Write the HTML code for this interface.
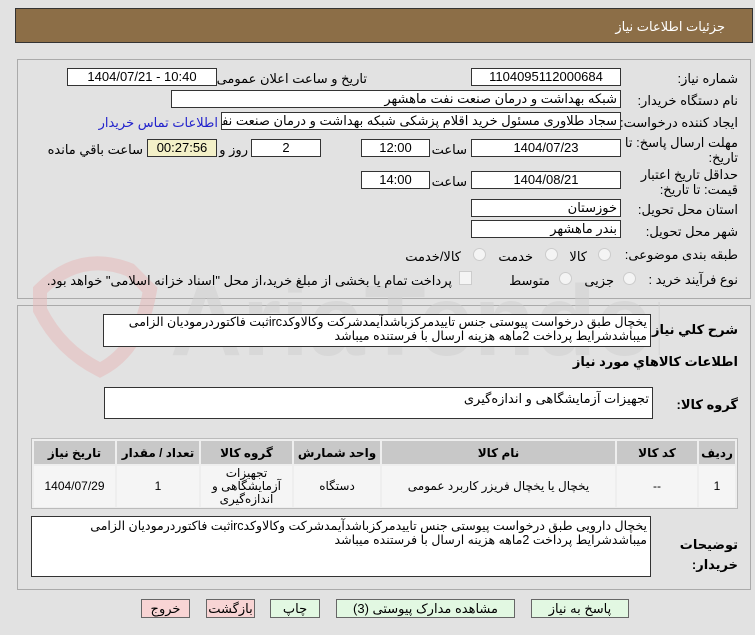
<!DOCTYPE html>
<html><head><meta charset="utf-8"><style>
body{margin:0;width:755px;height:635px;background:#e2e2e2;font-family:"Liberation Sans","DejaVu Sans",sans-serif;font-size:12px;color:#000;position:relative;overflow:hidden}
.a{position:absolute}
.box{position:absolute;background:#fff;border:1px solid #333;box-sizing:border-box;font-size:13px;line-height:16px;text-align:center;white-space:nowrap;overflow:hidden}
.r{text-align:right;padding-right:3px;direction:rtl}
.l{position:absolute;direction:rtl;text-align:right;white-space:nowrap;font-size:13px}
.panel{position:absolute;border:1px solid #aaa;box-sizing:border-box}
.rad{position:absolute;width:11px;height:11px;border:1px solid #ccc;border-radius:50%;background:#f4f4f4}
.btn{position:absolute;top:599px;height:19px;border:1px solid #666;box-sizing:border-box;font-size:13px;text-align:center;line-height:17px}
table{border-collapse:separate;border-spacing:2px;direction:rtl}
td,th{font-size:12px;text-align:center;padding:0}
th{background:#c8c8c8;height:23px}
td{background:#f5f5f5;height:41px;line-height:13px}
</style></head><body>
<div class="a" style="left:15px;top:8px;width:738px;height:35px;background:#8c6e47;border:1px solid #333;box-sizing:border-box"></div>
<div class="l" style="right:30px;top:19px;color:#fff;font-size:13px">جزئیات اطلاعات نیاز</div>

<div class="panel" style="left:17px;top:59px;width:734px;height:240px"></div>
<div class="panel" style="left:17px;top:305px;width:734px;height:285px"></div>

<!-- watermark -->
<svg class="a" style="left:20px;top:250px" width="640" height="130" opacity="0.5">
<path d="M20 40 Q60 0 110 20 L130 40 Q120 100 80 120 Q40 100 20 60 Z" fill="none" stroke="#e6b8b8" stroke-width="14"/>
<text x="150" y="105" font-family="Liberation Sans" font-size="100" font-weight="bold" fill="#cfcfcf">AriaTender.net</text>
</svg>

<div class="l" style="right:17px;top:71px">شماره نیاز:</div>
<div class="box" style="left:471px;top:68px;width:150px;height:18px">1104095112000684</div>
<div class="l" style="right:388px;top:71px">تاریخ و ساعت اعلان عمومی:</div>
<div class="box" style="left:67px;top:68px;width:150px;height:18px">1404/07/21 - 10:40</div>

<div class="l" style="right:17px;top:93px">نام دستگاه خریدار:</div>
<div class="box r" style="left:171px;top:90px;width:450px;height:18px">شبکه بهداشت و درمان صنعت نفت ماهشهر</div>

<div class="l" style="right:17px;top:115px">ایجاد کننده درخواست:</div>
<div class="box r" style="left:221px;top:112px;width:400px;height:18px">سجاد طلاوری مسئول خرید اقلام پزشکی شبکه بهداشت و درمان صنعت نفت ماهشهر</div>
<div class="l" style="right:537px;top:115px;color:#2222cc">اطلاعات تماس خریدار</div>

<div class="l" style="right:17px;top:135px;line-height:15px">مهلت ارسال پاسخ: تا<br>تاریخ:</div>
<div class="box" style="left:471px;top:139px;width:150px;height:18px">1404/07/23</div>
<div class="l" style="right:288px;top:142px">ساعت</div>
<div class="box" style="left:361px;top:139px;width:69px;height:18px">12:00</div>
<div class="box" style="left:251px;top:139px;width:70px;height:18px">2</div>
<div class="l" style="right:507px;top:142px">روز و</div>
<div class="box" style="left:147px;top:139px;width:70px;height:18px;background:#f3f0c8">00:27:56</div>
<div class="l" style="right:612px;top:142px">ساعت باقي مانده</div>

<div class="l" style="right:17px;top:167px;line-height:15px">حداقل تاریخ اعتبار<br>قیمت: تا تاریخ:</div>
<div class="box" style="left:471px;top:171px;width:150px;height:18px">1404/08/21</div>
<div class="l" style="right:288px;top:174px">ساعت</div>
<div class="box" style="left:361px;top:171px;width:69px;height:18px">14:00</div>

<div class="l" style="right:17px;top:202px">استان محل تحویل:</div>
<div class="box r" style="left:471px;top:199px;width:150px;height:18px">خوزستان</div>
<div class="l" style="right:17px;top:224px">شهر محل تحویل:</div>
<div class="box r" style="left:471px;top:220px;width:150px;height:18px">بندر ماهشهر</div>

<div class="l" style="right:17px;top:247px">طبقه بندی موضوعی:</div>
<div class="rad" style="left:598px;top:248px"></div><div class="l" style="right:168px;top:249px">کالا</div>
<div class="rad" style="left:545px;top:248px"></div><div class="l" style="right:222px;top:249px">خدمت</div>
<div class="rad" style="left:473px;top:248px"></div><div class="l" style="right:294px;top:249px">کالا/خدمت</div>

<div class="l" style="right:17px;top:272px">نوع فرآیند خرید :</div>
<div class="rad" style="left:623px;top:272px"></div><div class="l" style="right:141px;top:273px">جزیی</div>
<div class="rad" style="left:559px;top:272px"></div><div class="l" style="right:205px;top:273px">متوسط</div>
<div class="a" style="left:459px;top:271px;width:11px;height:12px;border:1px solid #ccc;background:#f4f4f4"></div>
<div class="l" style="right:303px;top:273px">پرداخت تمام یا بخشی از مبلغ خرید،از محل "اسناد خزانه اسلامی" خواهد بود.</div>

<div class="l" style="right:17px;top:322px;font-weight:bold">شرح کلي نیاز:</div>
<div class="box r" style="left:103px;top:314px;width:548px;height:33px;text-align:right;white-space:normal;line-height:14px;font-size:12.5px">یخچال  طبق درخواست پیوستی جنس تاییدمرکزباشدآیمدشرکت وکالاوکدirc‌ثبت فاکتوردرمودیان الزامی میباشدشرایط پرداخت 2ماهه هزینه ارسال با فرستنده میباشد</div>
<div class="l" style="right:17px;top:354px;font-weight:bold">اطلاعات کالاهاي مورد نياز</div>

<div class="l" style="right:17px;top:397px;font-weight:bold">گروه کالا:</div>
<div class="box r" style="left:104px;top:387px;width:549px;height:32px;text-align:right;padding-top:3px">تجهیزات آزمایشگاهی و اندازه‌گیری</div>

<div class="a" style="left:31px;top:438px;width:707px;height:71px;border:1px solid #bbb;box-sizing:border-box;background:#eee;overflow:hidden">
<table style="width:705px;margin:0">
<tr><th style="width:36px">ردیف</th><th style="width:80px">کد کالا</th><th style="width:233px">نام کالا</th><th style="width:86px">واحد شمارش</th><th style="width:91px">گروه کالا</th><th style="width:82px">تعداد / مقدار</th><th>تاریخ نیاز</th></tr>
<tr><td>1</td><td>--</td><td>یخچال یا یخچال فریزر کاربرد عمومی</td><td>دستگاه</td><td>تجهیزات<br>آزمایشگاهی و<br>اندازه‌گیری</td><td>1</td><td>1404/07/29</td></tr>
</table></div>

<div class="l" style="right:17px;top:535px;font-weight:bold;line-height:20px">توضیحات<br>خریدار:</div>
<div class="box r" style="left:31px;top:516px;width:620px;height:61px;text-align:right;white-space:normal;line-height:14px;font-size:12.5px;padding-top:2px">یخچال دارویی طبق درخواست پیوستی جنس تاییدمرکزباشدآیمدشرکت وکالاوکدirc‌ثبت فاکتوردرمودیان الزامی میباشدشرایط پرداخت 2ماهه هزینه ارسال با فرستنده میباشد</div>

<div class="btn" style="left:141px;width:49px;background:#f8d4d4">خروج</div>
<div class="btn" style="left:206px;width:49px;background:#f8d4d4">بازگشت</div>
<div class="btn" style="left:270px;width:50px;background:#e2f8e2">چاپ</div>
<div class="btn" style="left:336px;width:179px;background:#e2f8e2">مشاهده مدارک پیوستی (3)</div>
<div class="btn" style="left:531px;width:98px;background:#e2f8e2">پاسخ به نیاز</div>
</body></html>
